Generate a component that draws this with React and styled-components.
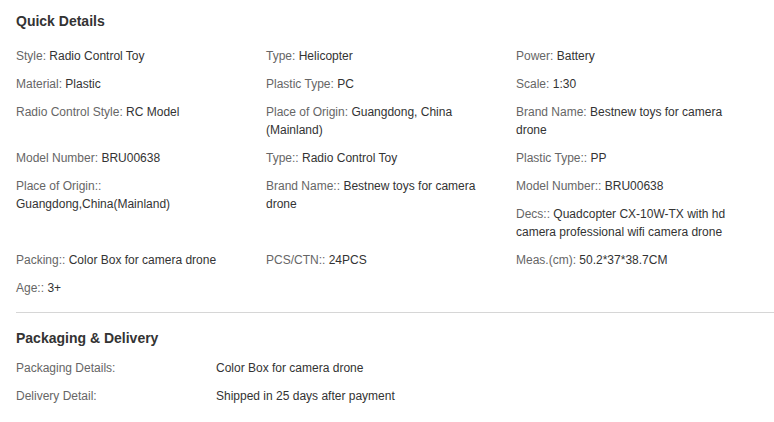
import React from "react";
import styled, { createGlobalStyle } from "styled-components";

const GlobalStyle = createGlobalStyle`
  html, body {
    margin: 0;
    padding: 0;
    background: #fff;
  }
  body {
    font-family: "Liberation Sans", Arial, Helvetica, sans-serif;
  }
`;

const Page = styled.div`
  padding: 12px 0 0 16px;
  width: 774px;
  box-sizing: border-box;
`;

const Section = styled.section`
  padding-bottom: ${(p) => p.$pb || 0}px;
`;

const Title = styled.h3`
  margin: 0 0 ${(p) => p.$mb}px;
  font-size: 14px;
  line-height: 18px;
  font-weight: bold;
  color: #333;
`;

const Grid = styled.div`
  display: grid;
  grid-template-columns: 250px 250px 250px;
  align-items: start;
`;

const Cell = styled.div`
  display: flex;
  flex-direction: column;
`;

const Item = styled.div`
  font-size: 12px;
  line-height: 18px;
  margin-bottom: 10px;
  padding-right: 20px;
  color: #333;
`;

const Label = styled.span`
  color: #666;
`;

const Divider = styled.hr`
  border: 0;
  border-top: 1px solid #d6d6d6;
  margin: 0 0 16px;
`;

const DetailRow = styled.div`
  display: grid;
  grid-template-columns: 200px 1fr;
  font-size: 12px;
  line-height: 18px;
  margin-bottom: 10px;
`;

const DetailValue = styled.span`
  color: #333;
`;

const rows = [
  [
    [["Style:", "Radio Control Toy"]],
    [["Type:", "Helicopter"]],
    [["Power:", "Battery"]],
  ],
  [
    [["Material:", "Plastic"]],
    [["Plastic Type:", "PC"]],
    [["Scale:", "1:30"]],
  ],
  [
    [["Radio Control Style:", "RC Model"]],
    [["Place of Origin:", "Guangdong, China (Mainland)"]],
    [["Brand Name:", "Bestnew toys for camera drone"]],
  ],
  [
    [["Model Number:", "BRU00638"]],
    [["Type::", "Radio Control Toy"]],
    [["Plastic Type::", "PP"]],
  ],
  [
    [["Place of Origin::", "Guangdong,China(Mainland)"]],
    [["Brand Name::", "Bestnew toys for camera drone"]],
    [
      ["Model Number::", "BRU00638"],
      ["Decs::", "Quadcopter CX-10W-TX with hd camera professional wifi camera drone"],
    ],
  ],
  [
    [["Packing::", "Color Box for camera drone"]],
    [["PCS/CTN::", "24PCS"]],
    [["Meas.(cm):", "50.2*37*38.7CM"]],
  ],
  [[["Age::", "3+"]], [], []],
];

const delivery = [
  ["Packaging Details:", "Color Box for camera drone"],
  ["Delivery Detail:", "Shipped in 25 days after payment"],
];

export default function App() {
  return (
    <>
      <GlobalStyle />
      <Page>
        <Section $pb={5}>
          <Title $mb={17}>Quick Details</Title>
          <Grid>
            {rows.map((row, r) =>
              row.map((cell, c) => (
                <Cell key={`${r}-${c}`}>
                  {cell.map(([label, value]) => (
                    <Item key={label}>
                      <Label>{label}</Label> {value}
                    </Item>
                  ))}
                </Cell>
              ))
            )}
          </Grid>
        </Section>
        <Divider />
        <Section>
          <Title $mb={12}>Packaging &amp; Delivery</Title>
          {delivery.map(([label, value]) => (
            <DetailRow key={label}>
              <Label>{label}</Label>
              <DetailValue>{value}</DetailValue>
            </DetailRow>
          ))}
        </Section>
      </Page>
    </>
  );
}
